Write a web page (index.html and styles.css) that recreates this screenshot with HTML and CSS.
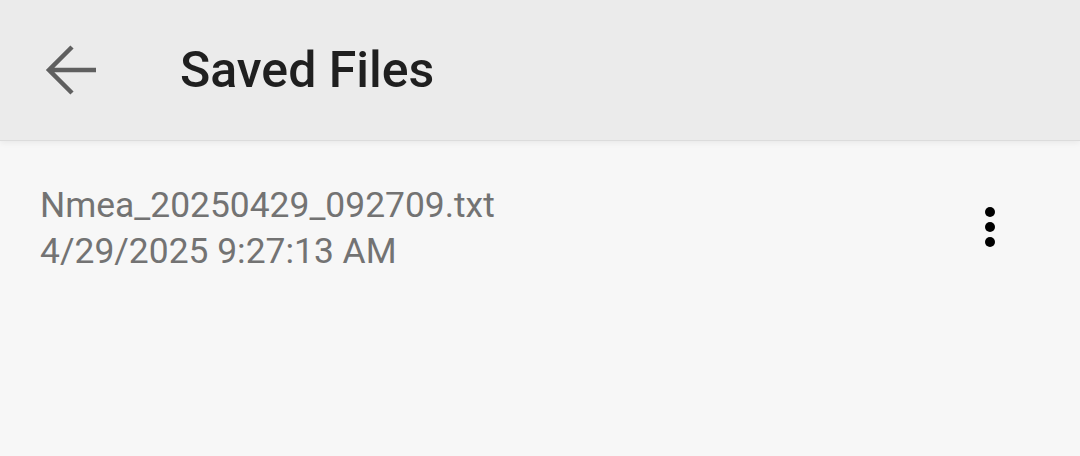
FILE: index.html
```html
<!DOCTYPE html>
<html lang="en">
<head>
    <meta charset="UTF-8">
    <meta name="viewport" content="width=device-width, initial-scale=1.0">
    <title>Saved Files</title>
    <link rel="stylesheet" href="styles.css">
</head>
<body>
    <header class="toolbar">
        <button class="back-button" aria-label="Back">
            <svg width="56" height="56" viewBox="0 0 56 56">
                <path d="M9 28 H56 M32 5 L9 28 L32 51" fill="none" stroke="#5f5f5f" stroke-width="4.5"/>
            </svg>
        </button>
        <h1 class="toolbar-title">Saved Files</h1>
    </header>

    <main class="file-list">
        <div class="file-item">
            <div class="file-info">
                <div class="file-name">Nmea_20250429_092709.txt</div>
                <div class="file-date">4/29/2025 9:27:13 AM</div>
            </div>
            <button class="menu-button" aria-label="More options">
                <svg width="60" height="60" viewBox="0 0 24 24">
                    <circle cx="12" cy="6" r="2" fill="#000"/>
                    <circle cx="12" cy="12" r="2" fill="#000"/>
                    <circle cx="12" cy="18" r="2" fill="#000"/>
                </svg>
            </button>
        </div>
    </main>
</body>
</html>
```

FILE: styles.css
```css
body {
    font-family: Roboto, "Liberation Sans", sans-serif;
    margin: 0;
    padding: 0;
    background-color: #f7f7f7;
    height: 456px;
    overflow: hidden;
}

.toolbar {
    height: 140px;
    display: flex;
    align-items: center;
    background-color: #ebebeb;
    box-shadow: 0 1px 0 #dcdcdc, 0 3px 6px rgba(0, 0, 0, 0.06);
    position: relative;
}

.back-button {
    width: 56px;
    height: 56px;
    margin-left: 40px;
    padding: 0;
    border: none;
    background: none;
    display: flex;
    align-items: center;
    justify-content: center;
}

.back-button svg {
    overflow: visible;
}

.toolbar-title {
    margin: 0 0 0 84px;
    font-size: 50px;
    font-weight: 500;
    color: #1f1f1f;
}

.file-list {
    padding-top: 42px;
}

.file-item {
    display: flex;
    align-items: center;
    padding: 0 60px 0 40px;
}

.file-info {
    flex: 1;
}

.file-name,
.file-date {
    font-size: 35.4px;
    line-height: 46px;
    color: #737373;
}

.menu-button {
    width: 60px;
    height: 60px;
    margin-bottom: 2px;
    padding: 0;
    border: none;
    background: none;
}
```
